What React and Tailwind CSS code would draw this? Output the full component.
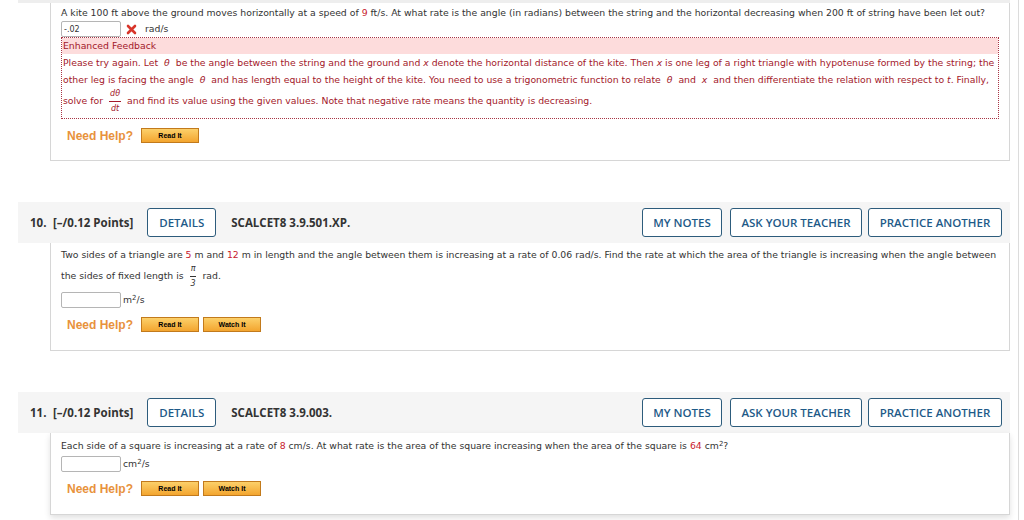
import { useState } from "react";

const body = { fontFamily: '"DejaVu Sans", Verdana, sans-serif' };

const Frac = ({ top, bottom }) => (
  <span className="inline-flex flex-col items-center align-middle mx-[6px] leading-none text-[8px]">
    <span className="px-[1px] pb-[3px] italic">{top}</span>
    <span className="border-t border-current w-full text-center pt-[3px] italic">{bottom}</span>
  </span>
);

const Red = ({ children }) => <span className="text-[#c8202d]">{children}</span>;

const OutlineBtn = ({ children, w }) => (
  <button className={`${w} h-[29px] border border-[#2d5c7c] rounded-[3px] text-[#1e5a88] font-semibold text-[11.5px] bg-white`}>
    {children}
  </button>
);

const Header = ({ num, code }) => (
  <div className="h-[41px] bg-[#f5f5f5] flex items-center pl-[12px] pr-[8px] font-bold text-[11.5px] text-[#333]" style={{ fontFamily: '"Open Sans", sans-serif' }}>
    <span className="w-[23px]">{num}</span>
    <span>[–/0.12 Points]</span>
    <span className="ml-[14px]">
      <OutlineBtn w="w-[69px]">DETAILS</OutlineBtn>
    </span>
    <span className="ml-[15px]">{code}</span>
    <div className="ml-auto flex">
      <OutlineBtn w="w-[80px]">MY NOTES</OutlineBtn>
      <span className="w-[8px]" />
      <OutlineBtn w="w-[132px]">ASK YOUR TEACHER</OutlineBtn>
      <span className="w-[6px]" />
      <OutlineBtn w="w-[134px]">PRACTICE ANOTHER</OutlineBtn>
    </div>
  </div>
);

const HelpBtn = ({ children }) => (
  <button
    className="w-[58px] h-[15px] border border-[#c27a1c] bg-[linear-gradient(#fcd06a,#f3a52f)] text-[7px] font-bold text-black leading-none"
    style={{ fontFamily: '"Liberation Sans", Arial, sans-serif' }}
  >
    {children}
  </button>
);

const NeedHelp = ({ watch = true }) => (
  <div className="flex items-center h-[15px] gap-[4px] ml-[6px] leading-none">
    <span className="text-[12px] font-bold text-[#e8923c] mr-[4px]" style={{ fontFamily: '"Liberation Sans", Arial, sans-serif' }}>
      Need Help?
    </span>
    <HelpBtn>Read It</HelpBtn>
    {watch && <HelpBtn>Watch It</HelpBtn>}
  </div>
);

const Answer = ({ value, unit, wrong }) => {
  const [v, setV] = useState(value || "");
  return (
    <div className="flex items-center h-[16px]">
      <input
        value={v}
        onChange={(e) => setV(e.target.value)}
        className="w-[60px] h-[16px] border border-[#b5b5b5] rounded-[2px] px-[2px] text-[8px] text-[#333] outline-none"
      />
      {wrong && (
        <svg width="11" height="11" viewBox="0 0 11 11" className="ml-[5px]">
          <path d="M2 2 L9 9 M9 2 L2 9" stroke="#d8362b" strokeWidth="2.6" strokeLinecap="round" />
        </svg>
      )}
      <span className={wrong ? "ml-[8px]" : "ml-[2px]"}>{unit}</span>
    </div>
  );
};

export default function App() {
  return (
    <div className="w-[1024px] h-[520px] overflow-hidden bg-white flex text-[#333] text-[9.3px]" style={body}>
      <div className="w-[1010px] pl-[18px] shrink-0">
        <div className="h-[3px] bg-[#eeeeee]" />

        {/* question 9 body */}
        <div className="ml-[32px] border-x border-b border-[#d6d6d6] px-[10px] pt-[2px] h-[158px]">
          <p className="leading-[16px] whitespace-nowrap">
            A kite 100 ft above the ground moves horizontally at a speed of <Red>9</Red> ft/s. At what rate is the angle (in radians) between the string and the horizontal decreasing when 200 ft of string have been let out?
          </p>
          <Answer value="-.02" unit="rad/s" wrong />
          <div className="border border-dotted border-[#a83646] text-[#a3182a]">
            <div className="h-[16px] bg-[#fddcdc] leading-[16px] px-[1px]">Enhanced Feedback</div>
            <div className="px-[1px] pb-[5px] whitespace-nowrap">
              <p className="leading-[17px]">
                Please try again. Let <i className="mx-[3px]">θ</i> be the angle between the string and the ground and <i>x</i> denote the horizontal distance of the kite. Then <i>x</i> is one leg of a right triangle with hypotenuse formed by the string; the
              </p>
              <p className="leading-[17px]">
                other leg is facing the angle <i className="mx-[3px]">θ</i> and has length equal to the height of the kite. You need to use a trigonometric function to relate <i className="mx-[3px]">θ</i> and <i className="mx-[3px]">x</i> and then differentiate the relation with respect to <i>t</i>. Finally,
              </p>
              <p className="leading-[25px]">
                solve for
                <Frac top="dθ" bottom="dt" />
                and find its value using the given values. Note that negative rate means the quantity is decreasing.
              </p>
            </div>
          </div>
          <div className="mt-[9px]">
            <NeedHelp watch={false} />
          </div>
        </div>

        <div className="h-[41px]" />
        <Header num="10." code="SCALCET8 3.9.501.XP." />
        <div className="ml-[32px] border-x border-b border-[#d6d6d6] px-[10px] pt-[2px] h-[108px]">
          <p className="leading-[20px] whitespace-nowrap">
            Two sides of a triangle are <Red>5</Red> m and <Red>12</Red> m in length and the angle between them is increasing at a rate of 0.06 rad/s. Find the rate at which the area of the triangle is increasing when the angle between
          </p>
          <p className="leading-[28px] -mt-[3px]">
            the sides of fixed length is
            <Frac top="π" bottom="3" />
            rad.
          </p>
          <div className="mt-[2px]">
            <Answer
              unit={
                <>
                  m<sup className="text-[7px]">2</sup>/s
                </>
              }
            />
          </div>
          <div className="mt-[9px]">
            <NeedHelp />
          </div>
        </div>

        <div className="h-[41px]" />
        <Header num="11." code="SCALCET8 3.9.003." />
        <div className="ml-[32px] border-x border-b border-[#d6d6d6] px-[10px] pt-[3px] h-[82px] shadow-[0_3px_6px_rgba(0,0,0,0.12)]">
          <p className="leading-[20px] whitespace-nowrap">
            Each side of a square is increasing at a rate of <Red>8</Red> cm/s. At what rate is the area of the square increasing when the area of the square is <Red>64</Red> cm<sup className="text-[7px]">2</sup>?
          </p>
          <Answer
            unit={
              <>
                cm<sup className="text-[7px]">2</sup>/s
              </>
            }
          />
          <div className="mt-[9px]">
            <NeedHelp />
          </div>
        </div>
      </div>
      <div className="ml-[8px] w-[1px] bg-[#dcdcdc]" />
    </div>
  );
}
